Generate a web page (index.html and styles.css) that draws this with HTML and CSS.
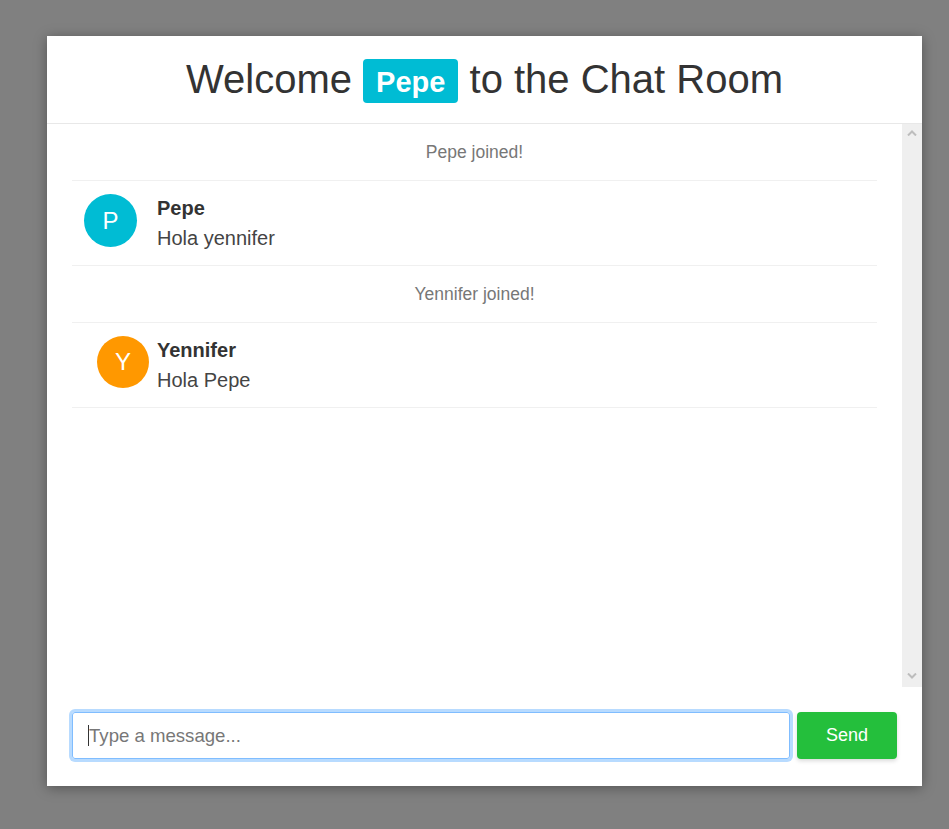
FILE: index.html
```html
<!DOCTYPE html>
<html>
<head>
<meta charset="utf-8">
<link rel="stylesheet" href="styles.css">
</head>
<body>
<div class="card">
  <header class="header">
    <h1 class="title">Welcome <span class="badge">Pepe</span> to the Chat Room</h1>
  </header>
  <div class="body">
    <div class="messages">
      <div class="system">Pepe joined!</div>
      <div class="msg">
        <div class="avatar avatar-cyan">P</div>
        <div class="msg-text">
          <div class="name">Pepe</div>
          <div class="text">Hola yennifer</div>
        </div>
      </div>
      <div class="system">Yennifer joined!</div>
      <div class="msg msg-narrow">
        <div class="avatar avatar-orange">Y</div>
        <div class="msg-text">
          <div class="name">Yennifer</div>
          <div class="text">Hola Pepe</div>
        </div>
      </div>
    </div>
    <div class="scrollbar">
      <svg class="arrow" width="10" height="6" viewBox="0 0 10 6"><path d="M1 5.5 L5 1.5 L9 5.5" fill="none" stroke="#bdbdbd" stroke-width="2"/></svg>
      <svg class="arrow" width="10" height="6" viewBox="0 0 10 6"><path d="M1 0.5 L5 4.5 L9 0.5" fill="none" stroke="#bdbdbd" stroke-width="2"/></svg>
    </div>
  </div>
  <footer class="footer">
    <div class="input"><span class="caret"></span><span class="placeholder">Type a message...</span></div>
    <button class="send">Send</button>
  </footer>
</div>
</body>
</html>
```

FILE: styles.css
```css
html, body {
  margin: 0;
  padding: 0;
}
body {
  background: #808080;
  font-family: "Liberation Sans", Arial, sans-serif;
  padding: 36px 0 0 47px;
  height: 829px;
  box-sizing: border-box;
}
.card {
  width: 875px;
  height: 750px;
  background: #fff;
  box-shadow: 0 2px 12px rgba(0, 0, 0, 0.35);
  display: flex;
  flex-direction: column;
}
.header {
  height: 87px;
  border-bottom: 1px solid #e8e8e8;
  display: flex;
  align-items: center;
  justify-content: center;
  flex-shrink: 0;
}
.title {
  margin: 0;
  font-size: 40px;
  font-weight: normal;
  color: #333;
  display: flex;
  align-items: center;
  white-space: pre;
}
.badge {
  display: inline-block;
  background: #00bcd4;
  color: #fff;
  font-weight: bold;
  font-size: 29px;
  border-radius: 4px;
  height: 44px;
  line-height: 46px;
  padding: 0 13px;
  margin: 2px 0 0 0;
}
.body {
  flex: 1;
  display: flex;
  min-height: 0;
}
.messages {
  flex: 1;
  padding: 0 25px;
}
.system {
  height: 55px;
  border-bottom: 1px solid #f0f0f0;
  display: flex;
  align-items: center;
  justify-content: center;
  color: #777;
  font-size: 17.5px;
  padding-top: 1px;
}
.msg {
  height: 85px;
  box-sizing: border-box;
  border-bottom: 1px solid #f0f0f0;
  display: flex;
  align-items: flex-start;
  padding: 13px 0 0 12px;
}
.avatar {
  width: 53px;
  height: 53px;
  border-radius: 50%;
  color: #fff;
  font-size: 24px;
  display: flex;
  align-items: center;
  justify-content: center;
  flex-shrink: 0;
  margin-right: 20px;
}
.msg-narrow {
  padding-left: 25px;
}
.msg-narrow .avatar {
  width: 52px;
  height: 52px;
  margin-right: 8px;
}
.avatar-cyan { background: #00bcd4; }
.avatar-orange { background: #ff9800; }
.msg-text {
  padding-top: 0;
}
.name {
  font-weight: bold;
  font-size: 20px;
  color: #333;
  line-height: 28px;
}
.text {
  font-size: 20px;
  color: #444;
  line-height: 32px;
}
.scrollbar {
  width: 20px;
  background: #efefef;
  display: flex;
  flex-direction: column;
  justify-content: space-between;
  align-items: center;
  padding: 6px 0 8px 0;
  box-sizing: border-box;
}
.arrow {
  display: block;
}
.footer {
  height: 99px;
  flex-shrink: 0;
  box-sizing: border-box;
  padding: 25px 25px 0 25px;
  display: flex;
  align-items: flex-start;
}
.input {
  width: 718px;
  height: 47px;
  box-sizing: border-box;
  border: 1px solid #80bdff;
  border-radius: 3px;
  box-shadow: 0 0 0 3px #b8dbff;
  display: flex;
  align-items: center;
  padding-left: 15px;
  font-size: 18.6px;
  color: #777;
}
.caret {
  width: 1px;
  height: 21px;
  background: #333;
}
.send {
  margin-left: 7px;
  width: 100px;
  height: 47px;
  border: none;
  border-radius: 4px;
  background: #24bf3c;
  color: #fff;
  font-family: "Liberation Sans", Arial, sans-serif;
  font-size: 18px;
  box-shadow: 0 2px 4px rgba(0, 0, 0, 0.15);
  padding: 0;
}
```
